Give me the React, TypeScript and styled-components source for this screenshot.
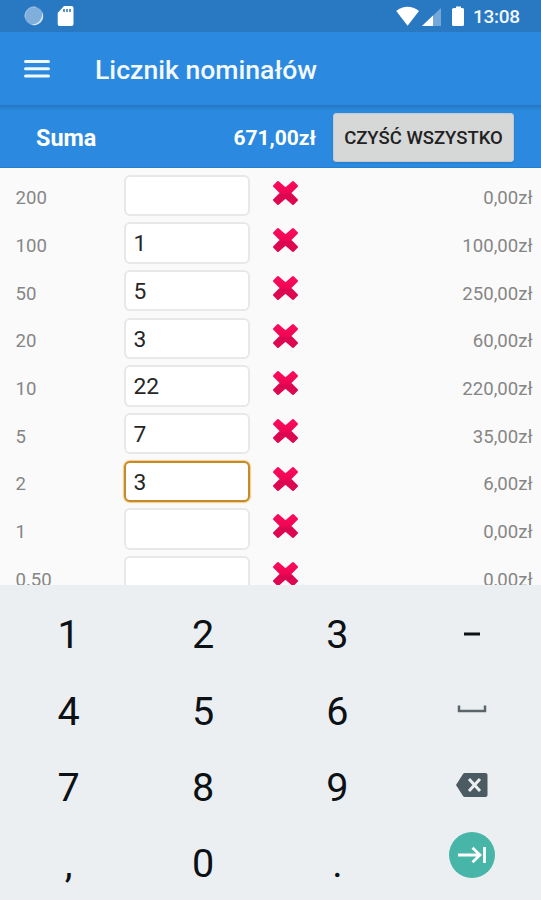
import React from "react";
import styled, { createGlobalStyle } from "styled-components";

const GlobalStyle = createGlobalStyle`
  * { box-sizing: border-box; }
  body { margin: 0; background: #fafafa; font-family: Roboto, "Liberation Sans", sans-serif; }
  button, input { font-family: inherit; margin: 0; }
`;

const Screen = styled.main`
  width: 541px;
  height: 900px;
  display: flex;
  flex-direction: column;
  overflow: hidden;
  background: #fafafa;
`;

const StatusBar = styled.header`
  flex: 0 0 32px;
  display: flex;
  align-items: center;
  padding: 0 20px 0 24px;
  background: #2878c2;
  svg { display: block; flex: none; }
`;

const StatusIcons = styled.div`
  display: flex;
  align-items: center;
  flex: 1;
  gap: 13px;
  padding-bottom: 1px;
`;

const Clock = styled.time`
  width: 48px;
  margin-left: 9px;
  font-size: 19px;
  font-weight: 500;
  line-height: 31px;
  letter-spacing: -0.3px;
  color: #f2f7fc;
  padding-top: 1px;
`;

const AppBar = styled.div`
  flex: 0 0 73px;
  display: flex;
  align-items: center;
  padding: 1px 24px 0;
  background: #2b8adf;
  svg { display: block; }
`;

const MenuButton = styled.button`
  border: 0;
  padding: 0;
  background: none;
  width: 71px;
`;

const Title = styled.h1`
  margin: 0;
  padding-top: 2px;
  font-size: 26.6px;
  line-height: 36px;
  font-weight: 500;
  color: #f4f9fe;
  white-space: nowrap;
`;

const SumBar = styled.section`
  flex: 0 0 63px;
  display: flex;
  align-items: center;
  padding: 2px 27px 0 36px;
  color: #fff;
  border-bottom: 1px solid #2580d0;
  background: linear-gradient(#2676c0, #2982d2 3px, #2b8adf 6px);
`;

const SumLabel = styled.span`
  flex: 1;
  padding-top: 1px;
  font-size: 23.4px;
  font-weight: 700;
`;

const SumValue = styled.span`
  font-size: 21px;
  padding-top: 1px;
  font-weight: 700;
  margin-right: 17px;
`;

const ClearAll = styled.button`
  width: 181px;
  height: 49px;
  padding: 1px 0 0;
  border: 1px solid #c4cbd0;
  border-radius: 3px;
  background: #d6d7d7;
  box-shadow: 0 1px 2px rgba(0, 0, 0, 0.12);
  color: #222;
  font-size: 18.5px;
  font-weight: 500;
  white-space: nowrap;
`;

const List = styled.section`
  flex: 0 0 417px;
  overflow: hidden;
  padding-top: 3.5px;
`;

const Row = styled.div`
  height: 47.67px;
  display: grid;
  grid-template-columns: 108px 126px 1fr auto;
  padding: 0 8.5px 0 15.5px;
  align-items: center;
`;

const Muted = styled.span`
  font-size: 18.6px;
  line-height: 24px;
  color: #868686;
  padding-top: 6px;
`;

const Amount = styled.input<{ $active?: boolean }>`
  width: 126px;
  height: 41.5px;
  padding: 2px 9px 0 8px;
  border: ${(p) => (p.$active ? "2px solid #c48a2b" : "2px solid #e8e8e8")};
  border-radius: 6px;
  outline: none;
  background: #fff;
  box-shadow: ${(p) => (p.$active ? "0 0 1px 1px #f2cd82" : "none")};
  color: #262626;
  font-size: 22.8px;
`;

const ClearButton = styled.button`
  border: 0;
  padding: 0;
  background: none;
  width: 27px;
  height: 26px;
  margin: -5px 0 0 22.5px;
  svg { display: block; }
`;

const Keypad = styled.section`
  flex: 1;
  display: grid;
  grid-template-columns: repeat(4, 134.4px);
  grid-template-rows: repeat(4, 76.3px);
  padding: 12px 0 0 1.5px;
  background: #eceff1;
  border-bottom: 2px solid #d4d7d9;
`;

const Key = styled.button<{ $raise?: number }>`
  display: flex;
  align-items: center;
  justify-content: center;
  border: 0;
  padding: 0 0 ${(p) => p.$raise ?? 0}px;
  background: none;
  color: #0b1115;
  font-size: 39.6px;
  line-height: 1;
`;

const EnterKey = styled.span`
  display: flex;
  align-items: center;
  justify-content: center;
  width: 46px;
  height: 46px;
  border-radius: 50%;
  background: #48b5a9;
`;

const rows: { label: string; count: string; total: string; active?: boolean }[] = [
  { label: "200", count: "", total: "0,00zł" },
  { label: "100", count: "1", total: "100,00zł" },
  { label: "50", count: "5", total: "250,00zł" },
  { label: "20", count: "3", total: "60,00zł" },
  { label: "10", count: "22", total: "220,00zł" },
  { label: "5", count: "7", total: "35,00zł" },
  { label: "2", count: "3", total: "6,00zł", active: true },
  { label: "1", count: "", total: "0,00zł" },
  { label: "0.50", count: "", total: "0,00zł" },
];

const CrossIcon = () => (
  <svg width="27" height="26" viewBox="0 0 27 26">
    <defs>
      <linearGradient id="cross" x1="0" y1="0" x2="0" y2="1">
        <stop offset="0" stopColor="#fb0b5d" />
        <stop offset="0.5" stopColor="#f00555" />
        <stop offset="0.6" stopColor="#da0750" />
        <stop offset="1" stopColor="#e00551" />
      </linearGradient>
    </defs>
    <path
      fill="url(#cross)"
      stroke="url(#cross)"
      strokeWidth="2"
      strokeLinejoin="round"
      d="M6 2 13.5 8.4 21 2 25 6 18 13 25 20 21 24 13.5 17.6 6 24 2 20 9 13 2 6Z"
    />
  </svg>
);

export default function App() {
  return (
    <>
      <GlobalStyle />
      <Screen>
        <StatusBar>
          <StatusIcons>
            <svg width="20" height="20" viewBox="0 0 20 20">
              <circle cx="10" cy="10" r="9.3" fill="#80afdc" />
              <path d="M18 6A9 9 0 0 1 7 18.6 10.500 10.500 0 0 0 18 6Z" fill="#e2edf8" />
              <path d="M1.3 12A9 9 0 0 1 12 1.2" fill="none" stroke="#a9c9e8" strokeWidth="1" />
            </svg>
            <svg width="17" height="20" viewBox="0 0 17 20">
              <path d="M7 0h7.5Q16.5 0 16.5 2v16q0 2-2 2h-12Q.7 20 .7 18V7Z" fill="#fff" />
              <path d="M7 3v3M10 3v3M13 3v3" stroke="#5289bd" strokeWidth="1.8" />
            </svg>
          </StatusIcons>
          <svg width="68" height="21" viewBox="0 0 68 21">
            <path d="M.2 5Q11.5-3.3 23 5L11.6 19.7Z" fill="#fff" />
            <path d="M45 2V20H26Z" fill="#74a8d9" />
            <path d="M37 9.5V20H26Z" fill="#fff" />
            <path d="M58 2h2V.5h5V2h1.7Q68 2 68 3.5v15q0 1.5-1.5 1.5h-9Q56 20 56 18.500v-15Q56 2 58 2Z" fill="#fff" />
          </svg>
          <Clock>13:08</Clock>
        </StatusBar>
        <AppBar>
          <MenuButton aria-label="Menu">
            <svg width="26" height="20" viewBox="0 0 26 20">
              <path d="M1.500 2.500h23M1.500 9.700h23M1.500 16.900h23" stroke="#f0f7fd" strokeWidth="3" strokeLinecap="round" />
            </svg>
          </MenuButton>
          <Title>Licznik nominałów</Title>
        </AppBar>
        <SumBar>
          <SumLabel>Suma</SumLabel>
          <SumValue>671,00zł</SumValue>
          <ClearAll>CZYŚĆ WSZYSTKO</ClearAll>
        </SumBar>
        <List>
          {rows.map((r) => (
            <Row key={r.label}>
              <Muted>{r.label}</Muted>
              <Amount value={r.count} readOnly $active={r.active} aria-label={r.label} />
              <ClearButton aria-label="Wyczyść">
                <CrossIcon />
              </ClearButton>
              <Muted>{r.total}</Muted>
            </Row>
          ))}
        </List>
        <Keypad>
          <Key>1</Key>
          <Key>2</Key>
          <Key>3</Key>
          <Key $raise={2}>
            <svg width="18" height="4" viewBox="0 0 18 4"><path d="M1 2h16" stroke="#0b1115" strokeWidth="3" /></svg>
          </Key>
          <Key>4</Key>
          <Key>5</Key>
          <Key>6</Key>
          <Key $raise={4}>
            <svg width="30" height="8" viewBox="0 0 30 8">
              <path d="M2 0.500v5.500h26V.500" fill="none" stroke="#59656b" strokeWidth="2.500" />
            </svg>
          </Key>
          <Key>7</Key>
          <Key>8</Key>
          <Key>9</Key>
          <Key $raise={5}>
            <svg width="32" height="24" viewBox="0 0 32 24">
              <path d="M9 0h20.500Q31.500 0 31.500 2v20q0 2-2 2H9Q7.700 24 7 23L0 12 7 1Q7.700 0 9 0Z" fill="#4c5b62" />
              <path d="m13 6 11 12M24 6 13 18" stroke="#eceff1" strokeWidth="3" />
            </svg>
          </Key>
          <Key>,</Key>
          <Key>0</Key>
          <Key>.</Key>
          <Key $raise={18}>
            <EnterKey>
              <svg width="30" height="18" viewBox="0 0 30 18">
                <path d="M1 9h22M15.500 1.700 23 9l-7.500 7.300M27.500 1v16" fill="none" stroke="#fff" strokeWidth="2.800" />
              </svg>
            </EnterKey>
          </Key>
        </Keypad>
      </Screen>
    </>
  );
}
